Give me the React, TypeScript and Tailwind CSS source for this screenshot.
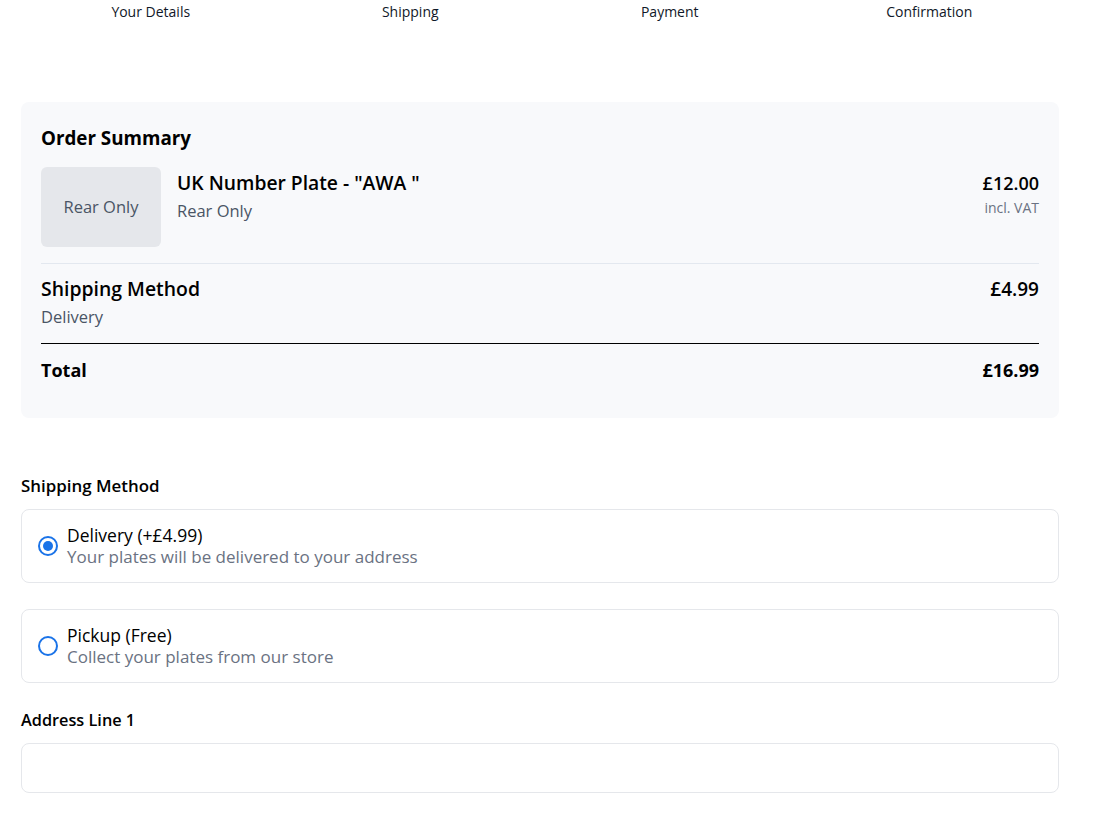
import React from "react";

const font = { fontFamily: '"Open Sans", "Noto Sans", sans-serif' };

function Radio({ checked }: { checked: boolean }) {
  return (
    <span className="flex h-5 w-5 shrink-0 items-center justify-center rounded-full border-2 border-[#1a73e8] bg-white">
      {checked && <span className="h-[10px] w-[10px] rounded-full bg-[#1a73e8]" />}
    </span>
  );
}

export default function App() {
  const steps = ["Your Details", "Shipping", "Payment", "Confirmation"];
  return (
    <div className="min-h-screen bg-white text-black" style={font}>
      <div className="w-[1080px] px-[21px] pb-6">
        <div className="grid grid-cols-4 text-center text-sm leading-[24px] text-gray-900">
          {steps.map((s) => (
            <div key={s}>{s}</div>
          ))}
        </div>

        <div className="mt-[78px] rounded-lg bg-[#f8f9fb] px-5 pb-[36px] pt-[22px]">
          <h2 className="text-[18.8px] font-bold leading-[28px]">Order Summary</h2>
          <div className="mt-[15px] flex border-b border-[#e3e8ef] pb-4">
            <div className="flex h-[80px] w-[120px] shrink-0 items-center justify-center rounded-md bg-[#e5e7eb] text-[16.5px] text-gray-600">
              Rear Only
            </div>
            <div className="ml-4 flex-1 pt-[4px]">
              <div className="text-[19.3px] font-semibold leading-[24px]">UK Number Plate - "AWA "</div>
              <div className="mt-[4px] text-[16.5px] leading-[24px] text-gray-600">Rear Only</div>
            </div>
            <div className="pt-[4px] text-right">
              <div className="text-lg font-semibold leading-[24px]">£12.00</div>
              <div className="mt-[3px] text-sm leading-[20px] text-gray-500">incl. VAT</div>
            </div>
          </div>

          <div className="flex justify-between border-b border-black pb-[14px] pt-[13px]">
            <div>
              <div className="text-[19.4px] font-semibold leading-[24px]">Shipping Method</div>
              <div className="mt-[4px] text-[16.5px] leading-[24px] text-gray-600">Delivery</div>
            </div>
            <div className="text-[19px] font-semibold leading-[24px]">£4.99</div>
          </div>

          <div className="flex justify-between pt-[14px] text-lg font-bold leading-[24px]">
            <div>Total</div>
            <div>£16.99</div>
          </div>
        </div>

        <div className="mt-[56px] text-[16.9px] font-semibold leading-[24px]">Shipping Method</div>
        <div className="mt-[11px] flex items-center gap-[9px] rounded-lg border border-[#e5e7eb] px-4 py-[14px]">
          <Radio checked />
          <div>
            <div className="text-[17.5px] font-medium leading-[22px]">Delivery (+£4.99)</div>
            <div className="text-[17px] font-medium leading-[22px] text-gray-500">Your plates will be delivered to your address</div>
          </div>
        </div>
        <div className="mt-[26px] flex items-center gap-[9px] rounded-lg border border-[#e5e7eb] px-4 py-[14px]">
          <Radio checked={false} />
          <div>
            <div className="text-[17.5px] font-medium leading-[22px]">Pickup (Free)</div>
            <div className="text-[17px] font-medium leading-[22px] text-gray-500">Collect your plates from our store</div>
          </div>
        </div>

        <div className="mt-[25px] text-[16.3px] font-semibold leading-[24px]">Address Line 1</div>
        <input
          type="text"
          className="mt-[11px] block h-[50px] w-full rounded-lg border border-[#e5e7eb] px-3 text-base outline-none"
        />
      </div>
    </div>
  );
}
